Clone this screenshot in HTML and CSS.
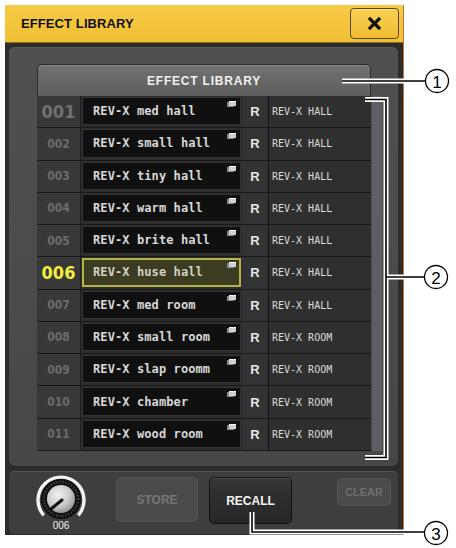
FILE: index.html
```html
<!DOCTYPE html>
<html>
<head>
<meta charset="utf-8">
<link rel="stylesheet" href="styles.css">
</head>
<body>
<div class="window">
  <div class="titlebar">
    <span class="title">EFFECT LIBRARY</span>
    <div class="close">
      <svg width="13" height="13" viewBox="0 0 13 13"><path d="M2 2 L11 11 M11 2 L2 11" stroke="#111" stroke-width="3.2" stroke-linecap="square"/></svg>
    </div>
  </div>
  <div class="main">
    <div class="panel">
      <div class="list">
        <div class="list-head">EFFECT LIBRARY</div>
        <div class="rows-wrap">
          <div class="rows">
            <div class="row"><div class="num big">001</div><div class="name"><span>REV-X med hall</span><i class="ico"></i></div><div class="r">R</div><div class="type">REV-X HALL</div></div>
            <div class="row"><div class="num">002</div><div class="name"><span>REV-X small hall</span><i class="ico"></i></div><div class="r">R</div><div class="type">REV-X HALL</div></div>
            <div class="row"><div class="num">003</div><div class="name"><span>REV-X tiny hall</span><i class="ico"></i></div><div class="r">R</div><div class="type">REV-X HALL</div></div>
            <div class="row"><div class="num">004</div><div class="name"><span>REV-X warm hall</span><i class="ico"></i></div><div class="r">R</div><div class="type">REV-X HALL</div></div>
            <div class="row"><div class="num">005</div><div class="name"><span>REV-X brite hall</span><i class="ico"></i></div><div class="r">R</div><div class="type">REV-X HALL</div></div>
            <div class="row sel"><div class="num big">006</div><div class="name"><span>REV-X huse hall</span><i class="ico"></i></div><div class="r">R</div><div class="type">REV-X HALL</div></div>
            <div class="row"><div class="num">007</div><div class="name"><span>REV-X med room</span><i class="ico"></i></div><div class="r">R</div><div class="type">REV-X HALL</div></div>
            <div class="row"><div class="num">008</div><div class="name"><span>REV-X small room</span><i class="ico"></i></div><div class="r">R</div><div class="type">REV-X ROOM</div></div>
            <div class="row"><div class="num">009</div><div class="name"><span>REV-X slap roomm</span><i class="ico"></i></div><div class="r">R</div><div class="type">REV-X ROOM</div></div>
            <div class="row"><div class="num">010</div><div class="name"><span>REV-X chamber</span><i class="ico"></i></div><div class="r">R</div><div class="type">REV-X ROOM</div></div>
            <div class="row"><div class="num">011</div><div class="name"><span>REV-X wood room</span><i class="ico"></i></div><div class="r">R</div><div class="type">REV-X ROOM</div></div>
          </div>
          <div class="scroll"></div>
        </div>
      </div>
    </div>
    <div class="bottombar">
      <div class="knob">
        <svg width="54" height="60" viewBox="0 0 54 60">
          <defs>
            <radialGradient id="cap" cx="0.4" cy="0.35" r="0.7">
              <stop offset="0" stop-color="#f2f2f2"/>
              <stop offset="0.6" stop-color="#c8c8c8"/>
              <stop offset="1" stop-color="#8c8c8c"/>
            </radialGradient>
          </defs>
          <path d="M9.7 43.3 A23 23 0 1 1 44.3 43.3" fill="none" stroke="#f4f4f4" stroke-width="3.4"/>
          <circle cx="27" cy="27" r="20" fill="#0c0c0c"/>
          <circle cx="27" cy="27" r="17" fill="none" stroke="#3a3a3a" stroke-width="3" stroke-dasharray="1.5 1.5"/>
          <circle cx="27" cy="27" r="14" fill="url(#cap)"/>
          <path d="M28 28 L17 37" stroke="#111" stroke-width="3" stroke-linecap="round"/>
          <text x="27" y="57" text-anchor="middle" class="knob-label">006</text>
        </svg>
      </div>
      <div class="btn store">STORE</div>
      <div class="btn recall">RECALL</div>
      <div class="btn clear">CLEAR</div>
    </div>
  </div>
</div>
<svg class="annot" width="456" height="548" viewBox="0 0 456 548">
  <g fill="none" stroke-linejoin="miter" stroke-linecap="butt">
    <path d="M342 81 H425" stroke="#fff" stroke-width="5"/>
    <path d="M342 81 H425" stroke="#000" stroke-width="1.6"/>
    <path d="M365 99.5 H386 V457.5 H365 M386 277 H425" stroke="#fff" stroke-width="5"/>
    <path d="M365 99.5 H386 V457.5 H365 M386 277 H425" stroke="#000" stroke-width="1.6"/>
    <path d="M252 512 V532 H425" stroke="#fff" stroke-width="5"/>
    <path d="M252 512 V532 H425" stroke="#000" stroke-width="1.6"/>
  </g>
  <g fill="#fff" stroke="#000" stroke-width="1.3">
    <circle cx="437" cy="81" r="11.5"/>
    <circle cx="436" cy="277" r="11.5"/>
    <circle cx="436" cy="533" r="11.5"/>
  </g>
  <g class="cnum" text-anchor="middle">
    <text x="437" y="87.5">1</text>
    <text x="436" y="283.5">2</text>
    <text x="436" y="539.5">3</text>
  </g>
</svg>
</body>
</html>
```

FILE: styles.css
```css
* { box-sizing: border-box; }
html, body {
  margin: 0;
  padding: 0;
  background: #fff;
  width: 456px;
  height: 548px;
  overflow: hidden;
  font-family: "Liberation Sans", Arial, sans-serif;
}
body { position: relative; }

.window {
  margin: 5px 0 0 5px;
  width: 399px;
  border-right: 1px solid #b8743a;
}

.titlebar {
  height: 38px;
  background: linear-gradient(#f6ca45, #f0bf33);
  display: flex;
  align-items: center;
  justify-content: space-between;
  padding: 0 4px 0 16px;
  border-bottom: 1px solid #8a6a1c;
}
.title {
  font-weight: bold;
  font-size: 13px;
  color: #111;
  letter-spacing: 0.1px;
}
.close {
  width: 49px;
  height: 31px;
  border: 1px solid #5c4612;
  border-radius: 4px;
  background: linear-gradient(#f8cf55, #efbd30);
  display: flex;
  align-items: center;
  justify-content: center;
  box-shadow: inset 0 1px 0 rgba(255,255,255,0.35);
}

.main {
  background: #2c2c2c;
  padding: 4px 5px 1px 4px;
  display: flex;
  flex-direction: column;
  gap: 5px;
}

.panel {
  background: linear-gradient(#505050, #474747);
  border-radius: 6px;
  padding: 16px 16px 0 28px;
  height: 419px;
  border-top: 1px solid #5c5c5c;
}

.list { width: 345px; }

.list-head {
  width: 334px;
  height: 32px;
  background: linear-gradient(#727272, #5d5d5d);
  border: 1px solid #2c2c2c;
  border-bottom: none;
  border-radius: 5px 5px 0 0;
  color: #f0f0f0;
  font-weight: bold;
  font-size: 12px;
  letter-spacing: 0.8px;
  display: flex;
  align-items: center;
  justify-content: center;
  box-shadow: inset 0 1px 0 rgba(255,255,255,0.15);
}

.rows-wrap {
  display: flex;
  gap: 1px;
}
.rows {
  width: 334px;
  display: grid;
  grid-auto-rows: 32.27px;
  background: #1a1a1a;
}
.scroll {
  width: 10px;
  background: #5e5e64;
}

.row {
  display: grid;
  grid-template-columns: 44px 161px 27px 102px;
  border-bottom: 1px solid #181818;
  background: #2c2c2c;
}
.num {
  background: #383838;
  color: #6c6c6c;
  font-family: "DejaVu Sans Condensed", "DejaVu Sans", sans-serif;
  font-weight: bold;
  font-size: 12px;
  display: flex;
  align-items: center;
  justify-content: center;
  border-right: 1px solid #202020;
}
.num.big {
  font-size: 18px;
  color: #707070;
}
.row.sel .num { color: #f4ee3c; }

.name {
  margin: 1px 1px 2px 1px;
  background: #101010;
  border: 1px solid #333;
  position: relative;
  display: flex;
  align-items: center;
  padding-left: 10px;
  color: #d8d8d8;
  font-family: "DejaVu Sans Mono", monospace;
  font-weight: bold;
  font-size: 12px;
  letter-spacing: 0.1px;
  white-space: pre;
}
.row.sel .name {
  background: #3c3c22;
  border: 2px solid #b4b446;
  padding-left: 9px;
  color: #d2d2c2;
}
.ico {
  position: absolute;
  right: 4px;
  top: 3px;
  width: 7px;
  height: 5px;
  background: #d0d0d0;
  box-shadow: -2px 1px 0 0 #8a8a8a;
  border-top: 1px solid #fff;
}
.row.sel .ico { right: 3px; top: 2px; }

.r {
  background: #333;
  color: #e8e8e8;
  font-weight: bold;
  font-size: 13px;
  display: flex;
  align-items: center;
  justify-content: center;
  border-right: 1px solid #121212;
}
.type {
  background: #2f2f2f;
  color: #dcdcdc;
  font-family: "DejaVu Sans Mono", monospace;
  font-size: 10px;
  display: flex;
  align-items: center;
  padding-left: 3px;
}

.bottombar {
  height: 63px;
  background: #3e3e3e;
  border-radius: 5px;
  border-top: 1px solid #555;
  display: flex;
  align-items: flex-start;
  padding-top: 5px;
}
.knob {
  margin-left: 25px;
  margin-top: -5px;
  width: 54px;
  height: 60px;
}
.knob svg { display: block; }
.knob-label {
  font-family: "Liberation Sans", Arial, sans-serif;
  font-size: 10px;
  fill: #f0f0f0;
}

.btn {
  display: flex;
  align-items: center;
  justify-content: center;
  font-weight: bold;
  font-size: 12px;
  border-radius: 5px;
}
.store {
  margin-left: 28px;
  width: 82px;
  height: 45px;
  background: #4a4a4a;
  border: 1px solid #555;
  color: #777;
}
.recall {
  margin-left: 11px;
  width: 83px;
  height: 47px;
  background: linear-gradient(#353535, #262626);
  border: 1px solid #121212;
  color: #f4f4f4;
  box-shadow: inset 0 1px 0 rgba(255,255,255,0.12);
}
.clear {
  margin-left: 45px;
  margin-top: 1px;
  width: 54px;
  height: 28px;
  background: #4a4a4a;
  border: 1px solid #565656;
  color: #6e6e6e;
  font-size: 11px;
}

.annot {
  position: absolute;
  left: 0;
  top: 0;
  pointer-events: none;
}
.cnum {
  font-family: "Liberation Sans", Arial, sans-serif;
  font-size: 17px;
  fill: #000;
}
```
